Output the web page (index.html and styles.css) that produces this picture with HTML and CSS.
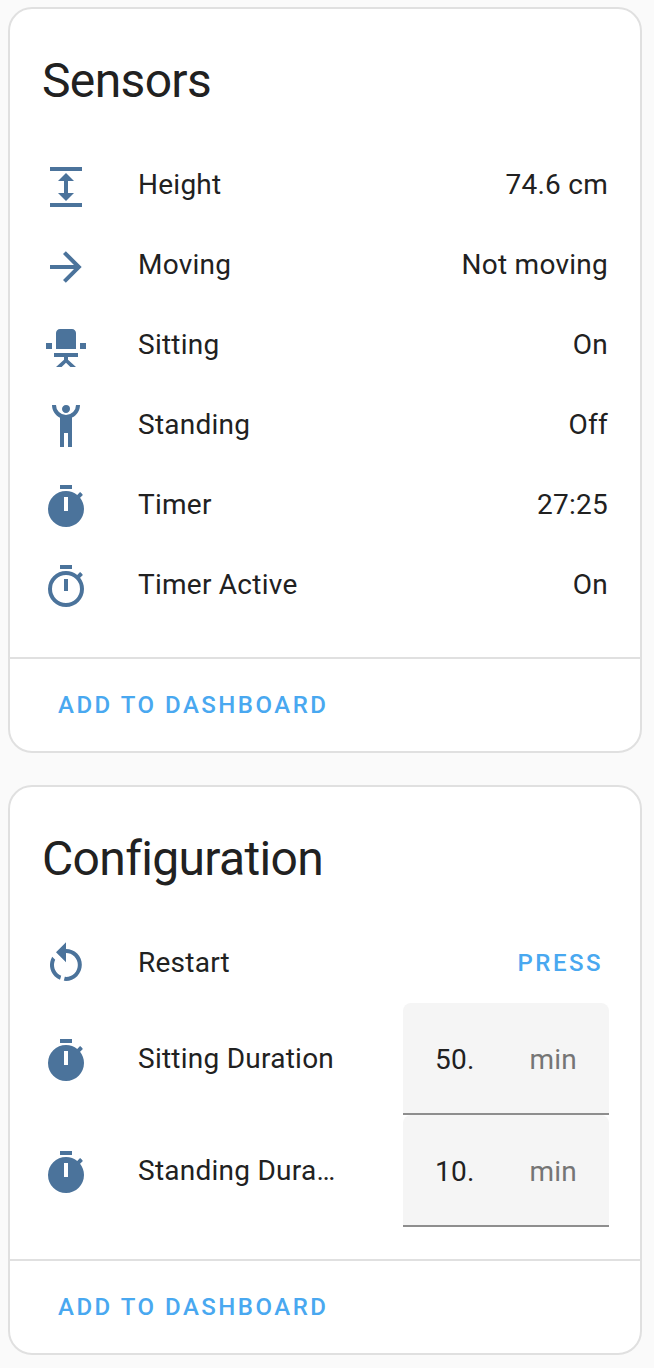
FILE: index.html
```html
<!DOCTYPE html>
<html lang="en">
<head>
<meta charset="utf-8">
<title>Device</title>
<link rel="stylesheet" href="styles.css">
</head>
<body>
<svg class="defs" width="0" height="0">
  <symbol id="timer" viewBox="0 0 24 24"><path d="M19.03 7.39L20.45 5.97C20 5.46 19.55 5 19.04 4.56L17.62 6C16.07 4.74 14.12 4 12 4A9 9 0 0 0 3 13A9 9 0 0 0 12 22C17 22 21 17.97 21 13C21 10.88 20.26 8.93 19.03 7.39M13 14H11V7H13V14M15 1H9V3H15V1Z"/></symbol>
</svg>
<section class="card">
  <h1 class="card-title">Sensors</h1>
  <div class="rows">
    <div class="row">
      <svg class="icon" viewBox="0 0 24 24"><path d="M13,9V15H16L12,19L8,15H11V9H8L12,5L16,9H13M4,2H20V4H4V2M4,20H20V22H4V20Z"/></svg>
      <span class="name">Height</span><span class="state">74.6 cm</span>
    </div>
    <div class="row">
      <svg class="icon" viewBox="0 0 24 24"><path d="M4,11V13H16L10.5,18.5L11.92,19.92L19.84,12L11.92,4.08L10.5,5.5L16,11H4Z"/></svg>
      <span class="name">Moving</span><span class="state">Not moving</span>
    </div>
    <div class="row">
      <svg class="icon" viewBox="0 0 24 24"><path d="M22 10V13H19V10H22M5 10V13H2V10H5M15 3C16.1 3 17 3.9 17 5V13H7V5C7 3.9 7.9 3 9 3H15M18 15V17H13V18.4L17 22H14.2L12 19.9L9.8 22H7L11 18.4V17H6V15H18Z"/></svg>
      <span class="name">Sitting</span><span class="state">On</span>
    </div>
    <div class="row">
      <svg class="icon" viewBox="0 0 24 24"><path d="M12,1C10.89,1 10,1.9 10,3C10,4.11 10.89,5 12,5C13.11,5 14,4.11 14,3A2,2 0 0,0 12,1M5,1C5,3.7 6.56,6.16 9,7.32V22H11V15H13V22H15V7.31C17.44,6.16 19,3.7 19,1H17A5,5 0 0,1 12,6A5,5 0 0,1 7,1H5Z"/></svg>
      <span class="name">Standing</span><span class="state">Off</span>
    </div>
    <div class="row">
      <svg class="icon"><use href="#timer"/></svg>
      <span class="name">Timer</span><span class="state">27:25</span>
    </div>
    <div class="row">
      <svg class="icon" viewBox="0 0 24 24"><path d="M12,20A7,7 0 0,1 5,13A7,7 0 0,1 12,6A7,7 0 0,1 19,13A7,7 0 0,1 12,20M19.03,7.39L20.45,5.97C20,5.46 19.55,5 19.04,4.56L17.62,6C16.07,4.74 14.12,4 12,4A9,9 0 0,0 3,13A9,9 0 0,0 12,22C17,22 21,17.97 21,13C21,10.88 20.26,8.93 19.03,7.39M11,14H13V8H11M15,1H9V3H15V1Z"/></svg>
      <span class="name">Timer Active</span><span class="state">On</span>
    </div>
  </div>
  <footer class="actions"><button class="button">ADD TO DASHBOARD</button></footer>
</section>
<section class="card">
  <h1 class="card-title">Configuration</h1>
  <div class="rows">
    <div class="row">
      <svg class="icon" viewBox="0 0 24 24"><path d="M12,4C14.1,4 16.1,4.8 17.6,6.3C20.7,9.4 20.7,14.5 17.6,17.6C15.8,19.5 13.3,20.2 10.9,19.9L11.4,17.9C13.1,18.1 14.9,17.5 16.2,16.2C18.5,13.9 18.5,10.1 16.2,7.7C15.1,6.6 13.5,6 12,6V10.6L7,5.6L12,0.6V4M6.3,17.6C3.7,15 3.3,11 5.1,7.9L6.6,9.4C5.5,11.6 5.9,14.4 7.8,16.2C8.3,16.7 8.9,17.1 9.6,17.4L9,19.4C8,19 7.1,18.4 6.3,17.6Z"/></svg>
      <span class="name">Restart</span><button class="button press">PRESS</button>
    </div>
    <div class="row tall">
      <svg class="icon"><use href="#timer"/></svg>
      <span class="name">Sitting Duration</span>
      <label class="field"><input class="value" value="50."><span class="unit">min</span></label>
    </div>
    <div class="row tall">
      <svg class="icon"><use href="#timer"/></svg>
      <span class="name">Standing Dura…</span>
      <label class="field"><input class="value" value="10."><span class="unit">min</span></label>
    </div>
  </div>
  <footer class="actions"><button class="button">ADD TO DASHBOARD</button></footer>
</section>
</body>
</html>
```
FILE: styles.css
```css
* { box-sizing: border-box; }
body {
  margin: 0;
  padding: 7px 12px 13px 8px;
  background: #fafafa;
  color: #212121;
  font: 400 28px/40px Roboto, sans-serif;
  letter-spacing: 0.25px;
  display: flex;
  flex-direction: column;
  gap: 32px;
}
.defs { position: absolute; }
.card {
  background: #fff;
  border: 2px solid #e0e0e0;
  border-radius: 24px;
}
.card-title {
  margin: 0;
  padding: 24px 32px 18px;
  font-size: 48px;
  font-weight: 400;
  line-height: 96px;
  letter-spacing: -0.65px;
}
.rows { padding: 0 32px 30px; }
.row { display: flex; align-items: center; height: 80px; }
.row.tall { height: 112px; }
.icon { width: 48px; height: 48px; margin-right: 48px; flex: none; fill: #4b739b; }
.name {
  flex: 1;
  min-width: 0;
  padding-bottom: 4px;
  white-space: nowrap;
  overflow: hidden;
  text-overflow: ellipsis;
}
.state { padding-bottom: 4px; }
.button {
  border: 0;
  padding: 0;
  background: none;
  color: #49a8f0;
  font: 500 24px/40px Roboto, sans-serif;
  letter-spacing: 2.5px;
}
.press { margin-right: 5px; padding-bottom: 4px; }
.actions { display: flex; align-items: center; height: 94px; border-top: 2px solid #e0e0e0; padding: 0 48px; }
.field {
  flex: none;
  width: 206px;
  height: 112px;
  margin: -4px -1px 0 64px;
  padding: 4px 32px 0;
  display: flex;
  align-items: center;
  background: #f5f5f5;
  border-bottom: 2px solid #8e8e8e;
  border-radius: 8px 8px 0 0;
}
.value {
  width: 44px;
  margin-right: auto;
  padding: 0;
  border: 0;
  background: none;
  color: inherit;
  font: inherit;
  letter-spacing: inherit;
}
.unit { color: #757575; }
```
